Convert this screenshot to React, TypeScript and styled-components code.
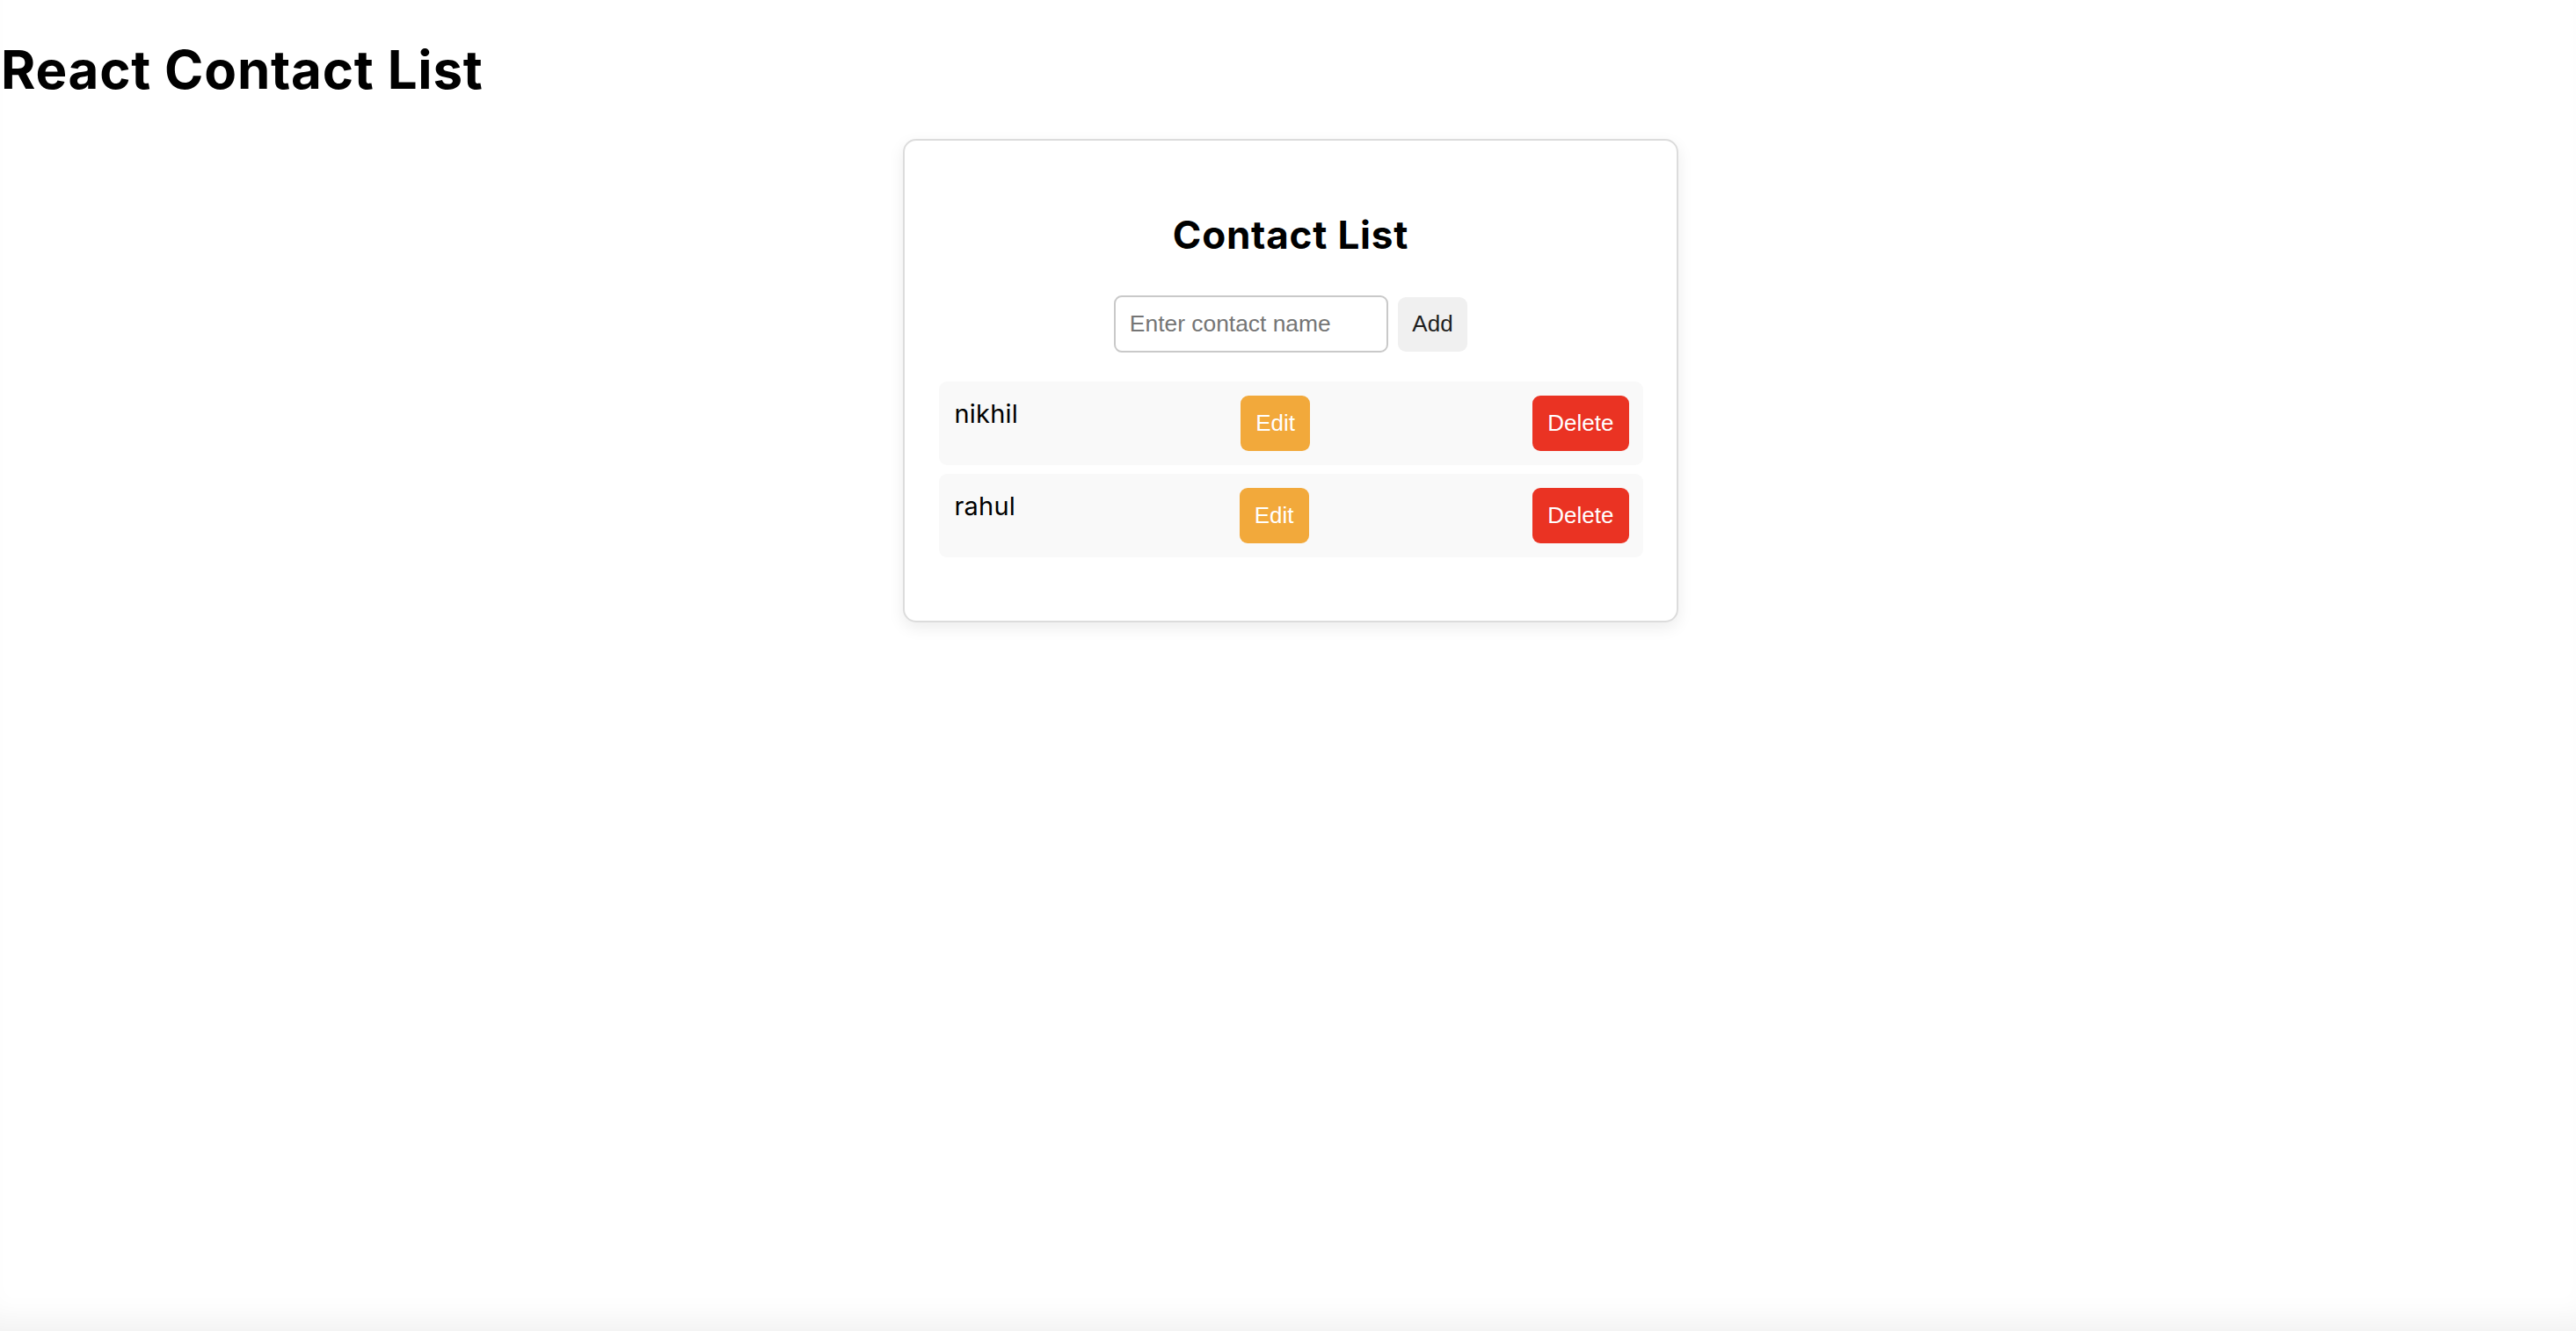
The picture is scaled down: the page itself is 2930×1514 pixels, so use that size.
import React, { useState } from "react";
import styled, { createGlobalStyle } from "styled-components";

const GlobalStyle = createGlobalStyle`
  html, body {
    margin: 0;
    padding: 0;
    background: #ffffff;
  }
  body {
    font-family: Inter, "Noto Sans", sans-serif;
    color: #000;
  }
`;

const Page = styled.div`
  min-height: 100vh;
  box-sizing: border-box;
  box-shadow: inset 0 -34px 34px -22px rgba(0, 0, 0, 0.06);
  overflow: hidden;
`;

const Title = styled.h1`
  margin: 44px 0 43px;
  padding-left: 1px;
  font-family: Inter, sans-serif;
  font-weight: 700;
  font-size: 60px;
  line-height: 71px;
  letter-spacing: 0.8px;
`;

const Main = styled.main`
  display: flex;
  justify-content: center;
  padding-left: 6px;
`;

const Card = styled.div`
  box-sizing: border-box;
  width: 882px;
  padding: 82px 38.5px 72px;
  border: 2px solid #dcdcdc;
  border-radius: 15px;
  background: #fff;
  box-shadow: 0 6px 18px rgba(0, 0, 0, 0.08);
`;

const Heading = styled.h2`
  margin: 0;
  text-align: center;
  font-family: Inter, sans-serif;
  font-weight: 700;
  font-size: 44px;
  line-height: 50px;
  letter-spacing: 0.8px;
`;

const Form = styled.div`
  display: flex;
  justify-content: center;
  align-items: center;
  gap: 11px;
  margin-top: 44px;
`;

const NameInput = styled.input`
  box-sizing: border-box;
  width: 312px;
  height: 65px;
  padding: 0 16px;
  border: 2px solid #c9c9c9;
  border-radius: 9px;
  font-family: "Liberation Sans", Arial, sans-serif;
  font-size: 26.4px;
  color: #222;
  outline: none;
  &::placeholder {
    color: #757575;
  }
`;

const AddButton = styled.button`
  height: 62px;
  padding: 0 16.5px;
  border: none;
  border-radius: 9px;
  background: #f0f0f0;
  color: #1f1f1f;
  font-family: "Liberation Sans", Arial, sans-serif;
  font-size: 26px;
  cursor: pointer;
`;

const List = styled.ul`
  list-style: none;
  margin: 33px 0 0;
  padding: 0;
  display: flex;
  flex-direction: column;
  gap: 10px;
`;

const Row = styled.li`
  display: flex;
  justify-content: space-between;
  align-items: flex-start;
  padding: 16px 16px 16px 18px;
  background: #f9f9f9;
  border-radius: 9px;
`;

const Name = styled.span`
  font-family: Inter, sans-serif;
  font-size: 29px;
  line-height: 42px;
  letter-spacing: 0.2px;
  color: #000;
`;

const ActionButton = styled.button<{ $variant: "edit" | "delete" }>`
  height: 63px;
  padding: 0 17px;
  border: none;
  border-radius: 9px;
  background: ${(p) => (p.$variant === "edit" ? "#f2a93b" : "#ea3323")};
  color: #fff;
  font-family: "Liberation Sans", Arial, sans-serif;
  font-size: 26px;
  line-height: 63px;
  cursor: pointer;
`;

export default function App() {
  const [contacts] = useState<string[]>(["nikhil", "rahul"]);
  return (
    <>
      <GlobalStyle />
      <Page>
        <Title>React Contact List</Title>
        <Main>
          <Card>
            <Heading>Contact List</Heading>
            <Form>
              <NameInput placeholder="Enter contact name" />
              <AddButton>Add</AddButton>
            </Form>
            <List>
              {contacts.map((c) => (
                <Row key={c}>
                  <Name>{c}</Name>
                  <ActionButton $variant="edit">Edit</ActionButton>
                  <ActionButton $variant="delete">Delete</ActionButton>
                </Row>
              ))}
            </List>
          </Card>
        </Main>
      </Page>
    </>
  );
}
